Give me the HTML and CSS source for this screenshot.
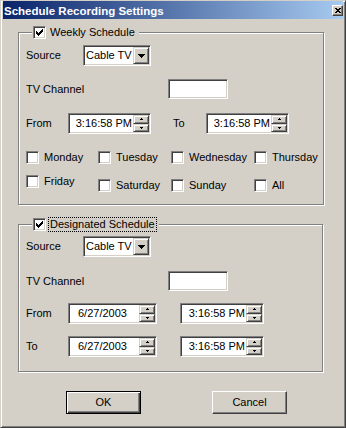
FILE: index.html
```html
<!DOCTYPE html>
<html>
<head>
<meta charset="utf-8">
<title>Schedule Recording Settings</title>
<link rel="stylesheet" href="styles.css">
</head>
<body>
<div class="window">
  <div class="titlebar">
    <span class="title">Schedule Recording Settings</span>
    <span class="close-btn"><svg width="6" height="5" viewBox="0 0 6 5" shape-rendering="crispEdges"><path d="M0 0h2v1h-2z M4 0h2v1h-2z M1 1h4v1h-4z M2 2h2v1h-2z M1 3h4v1h-4z M0 4h2v1h-2z M4 4h2v1h-2z" fill="#000"/></svg></span>
  </div>
  <div class="client">
    <fieldset class="group group-weekly">
      <legend class="group-legend">
        <span class="checkbox"><svg width="11" height="11" viewBox="0 0 11 11" shape-rendering="crispEdges"><path d="M8 2h1v1h-1z M7 3h2v1h-2z M2 4h1v1h-1z M6 4h3v1h-3z M2 5h2v1h-2z M5 5h3v1h-3z M2 6h5v1h-5z M3 7h3v1h-3z M4 8h1v1h-1z" fill="#000"/></svg></span>
        <span class="legend-text">Weekly Schedule</span>
      </legend>
      <div class="row">
        <span class="label label-source">Source</span>
        <div class="combo sunken">
          <span class="combo-text">Cable TV</span>
          <span class="combo-btn raised"><svg width="7" height="4" viewBox="0 0 7 4" shape-rendering="crispEdges"><path d="M0 0h7v1h-7z M1 1h5v1h-5z M2 2h3v1h-3z M3 3h1v1h-1z" fill="#000"/></svg></span>
        </div>
      </div>
      <div class="row row-channel">
        <span class="label label-channel">TV Channel</span>
        <span class="textbox sunken"></span>
      </div>
      <div class="row row-time">
        <span class="label label-from">From</span>
        <div class="picker picker-time sunken">
          <span class="picker-text">3:16:58 PM</span>
          <span class="spin">
            <span class="spin-btn raised"><svg width="3" height="2" viewBox="0 0 3 2" shape-rendering="crispEdges"><path d="M1 0h1v1h-1z M0 1h3v1h-3z" fill="#000"/></svg></span>
            <span class="spin-btn raised"><svg width="3" height="2" viewBox="0 0 3 2" shape-rendering="crispEdges"><path d="M0 0h3v1h-3z M1 1h1v1h-1z" fill="#000"/></svg></span>
          </span>
        </div>
        <span class="label label-to">To</span>
        <div class="picker picker-time sunken">
          <span class="picker-text">3:16:58 PM</span>
          <span class="spin">
            <span class="spin-btn raised"><svg width="3" height="2" viewBox="0 0 3 2" shape-rendering="crispEdges"><path d="M1 0h1v1h-1z M0 1h3v1h-3z" fill="#000"/></svg></span>
            <span class="spin-btn raised"><svg width="3" height="2" viewBox="0 0 3 2" shape-rendering="crispEdges"><path d="M0 0h3v1h-3z M1 1h1v1h-1z" fill="#000"/></svg></span>
          </span>
        </div>
      </div>
      <div class="days">
        <div class="day"><span class="checkbox"></span><span class="day-label">Monday</span></div>
        <div class="day"><span class="checkbox"></span><span class="day-label">Tuesday</span></div>
        <div class="day"><span class="checkbox"></span><span class="day-label">Wednesday</span></div>
        <div class="day"><span class="checkbox"></span><span class="day-label">Thursday</span></div>
        <div class="day"><span class="checkbox"></span><span class="day-label">Friday</span></div>
        <div class="day day-low"><span class="checkbox"></span><span class="day-label">Saturday</span></div>
        <div class="day day-low"><span class="checkbox"></span><span class="day-label">Sunday</span></div>
        <div class="day day-low"><span class="checkbox"></span><span class="day-label">All</span></div>
      </div>
    </fieldset>

    <fieldset class="group group-designated">
      <legend class="group-legend">
        <span class="checkbox"><svg width="11" height="11" viewBox="0 0 11 11" shape-rendering="crispEdges"><path d="M8 2h1v1h-1z M7 3h2v1h-2z M2 4h1v1h-1z M6 4h3v1h-3z M2 5h2v1h-2z M5 5h3v1h-3z M2 6h5v1h-5z M3 7h3v1h-3z M4 8h1v1h-1z" fill="#000"/></svg></span>
        <span class="legend-text focused">Designated Schedule</span>
      </legend>
      <div class="row">
        <span class="label label-source">Source</span>
        <div class="combo sunken">
          <span class="combo-text">Cable TV</span>
          <span class="combo-btn raised"><svg width="7" height="4" viewBox="0 0 7 4" shape-rendering="crispEdges"><path d="M0 0h7v1h-7z M1 1h5v1h-5z M2 2h3v1h-3z M3 3h1v1h-1z" fill="#000"/></svg></span>
        </div>
      </div>
      <div class="row row-channel2">
        <span class="label label-channel">TV Channel</span>
        <span class="textbox sunken"></span>
      </div>
      <div class="row row-date">
        <span class="label label-from">From</span>
        <div class="picker picker-date sunken">
          <span class="picker-text">6/27/2003</span>
          <span class="spin">
            <span class="spin-btn raised"><svg width="3" height="2" viewBox="0 0 3 2" shape-rendering="crispEdges"><path d="M1 0h1v1h-1z M0 1h3v1h-3z" fill="#000"/></svg></span>
            <span class="spin-btn raised"><svg width="3" height="2" viewBox="0 0 3 2" shape-rendering="crispEdges"><path d="M0 0h3v1h-3z M1 1h1v1h-1z" fill="#000"/></svg></span>
          </span>
        </div>
        <div class="picker picker-time2 sunken">
          <span class="picker-text">3:16:58 PM</span>
          <span class="spin">
            <span class="spin-btn raised"><svg width="3" height="2" viewBox="0 0 3 2" shape-rendering="crispEdges"><path d="M1 0h1v1h-1z M0 1h3v1h-3z" fill="#000"/></svg></span>
            <span class="spin-btn raised"><svg width="3" height="2" viewBox="0 0 3 2" shape-rendering="crispEdges"><path d="M0 0h3v1h-3z M1 1h1v1h-1z" fill="#000"/></svg></span>
          </span>
        </div>
      </div>
      <div class="row row-date">
        <span class="label label-from">To</span>
        <div class="picker picker-date sunken">
          <span class="picker-text">6/27/2003</span>
          <span class="spin">
            <span class="spin-btn raised"><svg width="3" height="2" viewBox="0 0 3 2" shape-rendering="crispEdges"><path d="M1 0h1v1h-1z M0 1h3v1h-3z" fill="#000"/></svg></span>
            <span class="spin-btn raised"><svg width="3" height="2" viewBox="0 0 3 2" shape-rendering="crispEdges"><path d="M0 0h3v1h-3z M1 1h1v1h-1z" fill="#000"/></svg></span>
          </span>
        </div>
        <div class="picker picker-time2 sunken">
          <span class="picker-text">3:16:58 PM</span>
          <span class="spin">
            <span class="spin-btn raised"><svg width="3" height="2" viewBox="0 0 3 2" shape-rendering="crispEdges"><path d="M1 0h1v1h-1z M0 1h3v1h-3z" fill="#000"/></svg></span>
            <span class="spin-btn raised"><svg width="3" height="2" viewBox="0 0 3 2" shape-rendering="crispEdges"><path d="M0 0h3v1h-3z M1 1h1v1h-1z" fill="#000"/></svg></span>
          </span>
        </div>
      </div>
    </fieldset>

    <div class="buttons">
      <div class="btn btn-default">OK</div>
      <div class="btn">Cancel</div>
    </div>
  </div>
</div>
</body>
</html>
```
FILE: styles.css
```css
* { box-sizing: border-box; }
html, body { margin: 0; padding: 0; }
body {
  font-family: "Liberation Sans", Arial, sans-serif;
  font-size: 11px;
  line-height: 13px;
  color: #000;
  background: #D4D0C8;
}
.window {
  width: 346px;
  height: 428px;
  background: #D4D0C8;
  border: 1px solid;
  border-color: #D4D0C8 #404040 #404040 #D4D0C8;
  box-shadow: inset 1px 1px 0 #fff, inset -1px -1px 0 #808080;
  display: flex;
  flex-direction: column;
}
.titlebar {
  margin: 0 2px;
  height: 18px;
  background: linear-gradient(to right, #0A246A, #A6CAF0);
  display: flex;
  align-items: center;
  justify-content: space-between;
  padding: 0 0 0 1px;
}
.title {
  color: #fff;
  font-weight: bold;
  font-size: 11.5px;
  line-height: 13px;
  padding-top: 2px;
}
.close-btn {
  width: 11px;
  height: 11px;
  background: #D4D0C8;
  border: 1px solid;
  border-color: #fff #404040 #404040 #fff;
  box-shadow: inset -1px -1px 0 #808080;
  display: flex;
  align-items: center;
  justify-content: center;
}
.client {
  padding: 6px 0 0 17px;
}
.sunken {
  border: 1px solid;
  border-color: #808080 #fff #fff #808080;
  box-shadow: inset 1px 1px 0 #404040, inset -1px -1px 0 #D4D0C8;
  padding: 1px;
  background: #fff;
}
.raised {
  background: #D4D0C8;
  border: 1px solid;
  border-color: #D4D0C8 #404040 #404040 #D4D0C8;
  box-shadow: inset 1px 1px 0 #fff, inset -1px -1px 0 #808080;
}
.group {
  margin: 0;
  padding: 0 0 12px 7px;
  border: 1px solid #808080;
  box-shadow: inset 1px 1px 0 #fff, 1px 1px 0 #fff;
  min-width: 0;
}
.group.group-weekly {
  width: 306px;
  padding-top: 5px;
}
.group.group-designated {
  width: 305px;
  margin-top: 12px;
  padding-top: 4px;
  padding-bottom: 14px;
}
.group-legend {
  margin-left: 6px;
  padding: 0 2px 0 1px;
  display: flex;
  align-items: center;
  background: #D4D0C8;
}
.checkbox {
  width: 13px;
  height: 13px;
  flex: none;
  background: #fff;
  border: 1px solid;
  border-color: #808080 #fff #fff #808080;
  box-shadow: inset 1px 1px 0 #404040, inset -1px -1px 0 #D4D0C8;
  display: block;
}
.checkbox svg { display: block; }
.legend-text {
  margin-left: 2px;
  border: 1px dotted transparent;
  padding: 0 1px;
  line-height: 13px;
}
.legend-text.focused { border-color: #000; }
.row {
  display: flex;
  align-items: center;
}
.label { flex: none; }
.label-source { width: 57px; }
.label-channel { width: 142px; }
.label-from { width: 42px; }
.label-to { margin-left: 22px; width: 33px; }
.combo {
  width: 68px;
  height: 21px;
  display: flex;
}
.combo-text {
  flex: 1;
  padding-left: 1px;
  line-height: 17px;
}
.combo-btn {
  width: 16px;
  height: 17px;
  display: flex;
  align-items: center;
  justify-content: center;
}
.textbox {
  display: block;
  width: 60px;
  height: 20px;
}
.row-channel { margin-top: 13px; }
.row-time { margin-top: 14px; }
.row-channel2 { margin-top: 14px; }
.row-date { margin-top: 12px; }
.picker {
  height: 21px;
  display: flex;
}
.picker-time { width: 83px; }
.picker-date { width: 89px; }
.picker-time2 { width: 84px; margin-left: 23px; }
.picker-text {
  flex: 1;
  line-height: 17px;
  text-align: right;
  padding-right: 1px;
  white-space: nowrap;
}
.picker-date .picker-text {
  text-align: left;
  padding-left: 8px;
}
.spin {
  width: 16px;
  display: flex;
  flex-direction: column;
}
.spin-btn {
  flex: 1;
  display: flex;
  align-items: center;
  justify-content: center;
}
.spin-btn svg { display: block; }
.days {
  margin-top: 17px;
  display: grid;
  grid-template-columns: 72px 73px 83px auto;
  row-gap: 11px;
  align-items: start;
}
.day {
  display: flex;
  align-items: center;
  gap: 5px;
}
.day-low { margin-top: 4px; }
.day-label { line-height: 13px; }
.buttons {
  margin-top: 19px;
  padding-left: 48px;
  display: flex;
  gap: 71px;
}
.btn {
  width: 75px;
  height: 23px;
  display: flex;
  align-items: center;
  justify-content: center;
  background: #D4D0C8;
  border: 1px solid;
  border-color: #fff #404040 #404040 #fff;
  box-shadow: inset -1px -1px 0 #808080;
}
.btn-default {
  border-color: #000;
  box-shadow: inset 1px 1px 0 #fff, inset -1px -1px 0 #404040, inset -2px -2px 0 #808080;
}
```
